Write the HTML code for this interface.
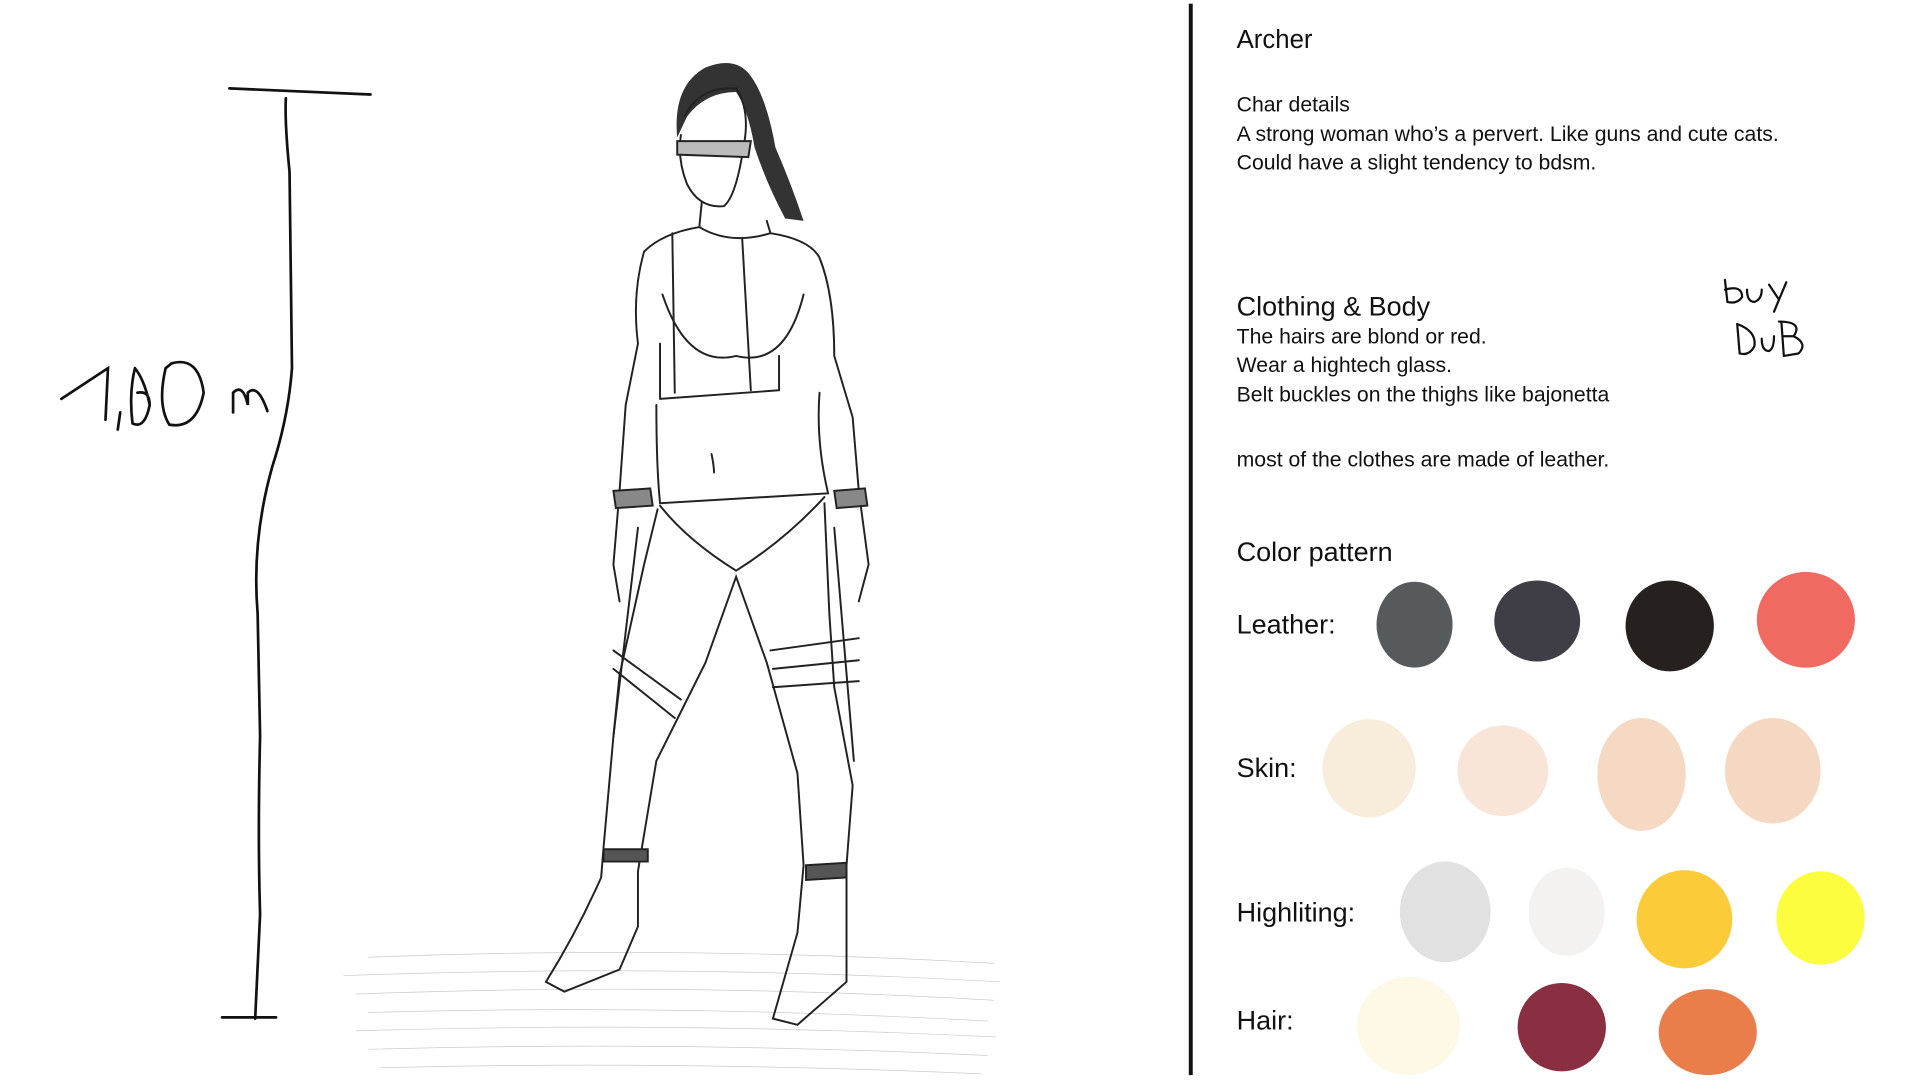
<!DOCTYPE html>
<html><head><meta charset="utf-8"><style>
html,body{margin:0;padding:0;background:#fff;width:1920px;height:1080px;overflow:hidden}
svg{display:block}
text{font-family:"Liberation Sans",sans-serif;fill:#111}
</style></head><body>
<svg width="1920" height="1080" viewBox="0 0 1565 880" preserveAspectRatio="none">
<g stroke="#ccc" stroke-width="0.6" fill="none">
<path d="M300 780 Q550 770 810 785"/><path d="M280 795 Q550 785 815 800"/><path d="M290 810 Q550 800 810 815"/><path d="M300 825 Q550 818 805 832"/><path d="M290 840 Q550 832 812 845"/><path d="M300 855 Q550 848 805 860"/><path d="M310 870 Q550 864 800 875"/>
</g>
<g stroke="#111" stroke-width="2.2" fill="none" stroke-linecap="round">
<path d="M187 72 L302 77"/>
<path d="M233 80 Q232 100 236 140 L238 300 Q235 340 222 380 Q205 440 210 500 L212 600 Q210 680 212 745 L208 830"/>
<path d="M181 829 L225 829"/>
<path d="M50 325 L88 300 L86 342 M98 336 L96 350 M110 300 Q105 320 108 345 Q118 350 122 330 Q118 310 110 300 M112 320 Q122 318 122 330 M135 300 Q128 330 138 346 Q160 350 166 320 Q162 290 140 296 Z M190 336 L190 320 Q198 312 202 330 L202 320 Q210 312 218 335"/>
</g>
<path d="M552 112 Q548 70 575 55 Q600 45 612 62 Q625 80 632 120 Q645 150 655 180 L640 178 Q625 150 615 120 Q610 90 600 75 Q575 75 560 95 Z" fill="#333"/>
<g stroke="#222" stroke-width="1.6" fill="none" stroke-linecap="round">
<path d="M558 95 Q570 70 600 72 Q612 90 606 120 Q600 160 590 168 Q570 170 560 150 Q552 130 555 110"/>
<path d="M552 115 L612 115 L610 128 L552 126 Z" fill="#bbb"/>
<path d="M572 165 L570 185 Q540 190 525 205 Q515 240 520 280 L510 330 L505 400 L500 460 L505 490 M625 180 L628 190 Q660 195 668 210 Q680 240 680 290 L695 340 L700 400 L708 460 L700 490"/>
<path d="M570 185 Q595 200 628 190"/>
<path d="M540 240 Q560 300 600 290 Q640 300 655 240"/>
<path d="M538 325 L635 318 L635 290 M538 325 L538 280"/>
<path d="M535 330 Q535 380 538 410 L675 402 Q665 360 668 320"/>
<path d="M580 370 Q582 380 582 385"/>
<path d="M538 412 Q560 440 600 465 Q640 440 672 405"/>
<path d="M536 415 L525 460 L505 550 L500 600 L492 690 L490 715 Q470 760 445 800 L460 808 L505 790 L520 755 L520 710 L535 620 L575 540 L600 470 L625 540 L650 630 L655 705 L650 760 L630 830 L650 835 L690 800 L690 760 L690 705 L695 640 L680 560 L676 500 L672 410"/>
<path d="M500 400 L530 398 L532 412 L502 414 Z M680 400 L705 398 L707 412 L682 414 Z" fill="#888"/>
<path d="M500 530 L555 570 M500 545 L550 585 M628 530 L700 520 M630 545 L700 538 M630 560 L700 555"/>
<path d="M492 692 L528 692 L528 702 L492 702 Z M657 705 L690 703 L690 715 L657 717 Z" fill="#555"/>
<path d="M548 190 L550 320 M605 195 L612 318 M520 430 L500 600 M680 430 L696 620"/>
</g>
<rect x="969" y="3" width="3.2" height="873" fill="#111"/>
<text x="1008" y="39" font-size="21">Archer</text>
<g font-size="17.3">
<text x="1008" y="91">Char details</text>
<text x="1008" y="115">A strong woman who’s  a pervert. Like guns and cute cats.</text>
<text x="1008" y="138">Could have a slight tendency to bdsm.</text>
<text x="1008" y="280">The hairs are blond or red.</text>
<text x="1008" y="303">Wear a hightech glass.</text>
<text x="1008" y="327">Belt buckles on the thighs like bajonetta</text>
<text x="1008" y="380">most of the clothes are made of leather.</text>
</g>
<g font-size="22">
<text x="1008" y="257">Clothing &amp; Body</text>
<text x="1008" y="457">Color pattern</text>
<text x="1008" y="516">Leather:</text>
<text x="1008" y="633">Skin:</text>
<text x="1008" y="751">Highliting:</text>
<text x="1008" y="839">Hair:</text>
</g>
<g stroke="#111" stroke-width="1.8" fill="none" stroke-linecap="round">
<path d="M1406 228 L1408 246 M1406 236 Q1420 232 1420 242 Q1416 248 1408 246 M1424 236 Q1424 246 1430 246 Q1436 244 1436 236 M1442 232 L1450 244 M1456 230 L1446 254"/>
<path d="M1416 264 L1418 288 M1416 264 Q1432 270 1430 282 Q1426 290 1418 288 M1436 276 Q1436 286 1442 286 Q1446 284 1446 274 M1452 262 L1454 290 M1450 262 Q1470 262 1462 274 Q1474 280 1466 288 L1454 290 M1454 274 L1462 274"/>
</g>
<ellipse cx="1153" cy="509" rx="31" ry="35" fill="#575a5c"/>
<ellipse cx="1253" cy="506" rx="35" ry="33" fill="#3f3d46"/>
<ellipse cx="1361" cy="510" rx="36" ry="37" fill="#26211e"/>
<ellipse cx="1472" cy="505" rx="40" ry="39" fill="#f06a62"/>
<ellipse cx="1116" cy="626" rx="38" ry="40" fill="#f8eddb"/>
<ellipse cx="1225" cy="628" rx="37" ry="37" fill="#f8e5d8"/>
<ellipse cx="1338" cy="631" rx="36" ry="46" fill="#f6d9c3"/>
<ellipse cx="1445" cy="628" rx="39" ry="43" fill="#f5d8c2"/>
<ellipse cx="1178" cy="743" rx="37" ry="41" fill="#e1e1e1"/>
<ellipse cx="1277" cy="743" rx="31" ry="36" fill="#f3f2f1"/>
<ellipse cx="1373" cy="749" rx="39" ry="40" fill="#fccb3a"/>
<ellipse cx="1484" cy="748" rx="36" ry="38" fill="#fdfd40"/>
<ellipse cx="1148" cy="836" rx="42" ry="40" fill="#fef8e7"/>
<ellipse cx="1273" cy="837" rx="36" ry="36" fill="#8a2f41"/>
<ellipse cx="1392" cy="841" rx="40" ry="35" fill="#e97e4a"/>
</svg>
</body></html>
